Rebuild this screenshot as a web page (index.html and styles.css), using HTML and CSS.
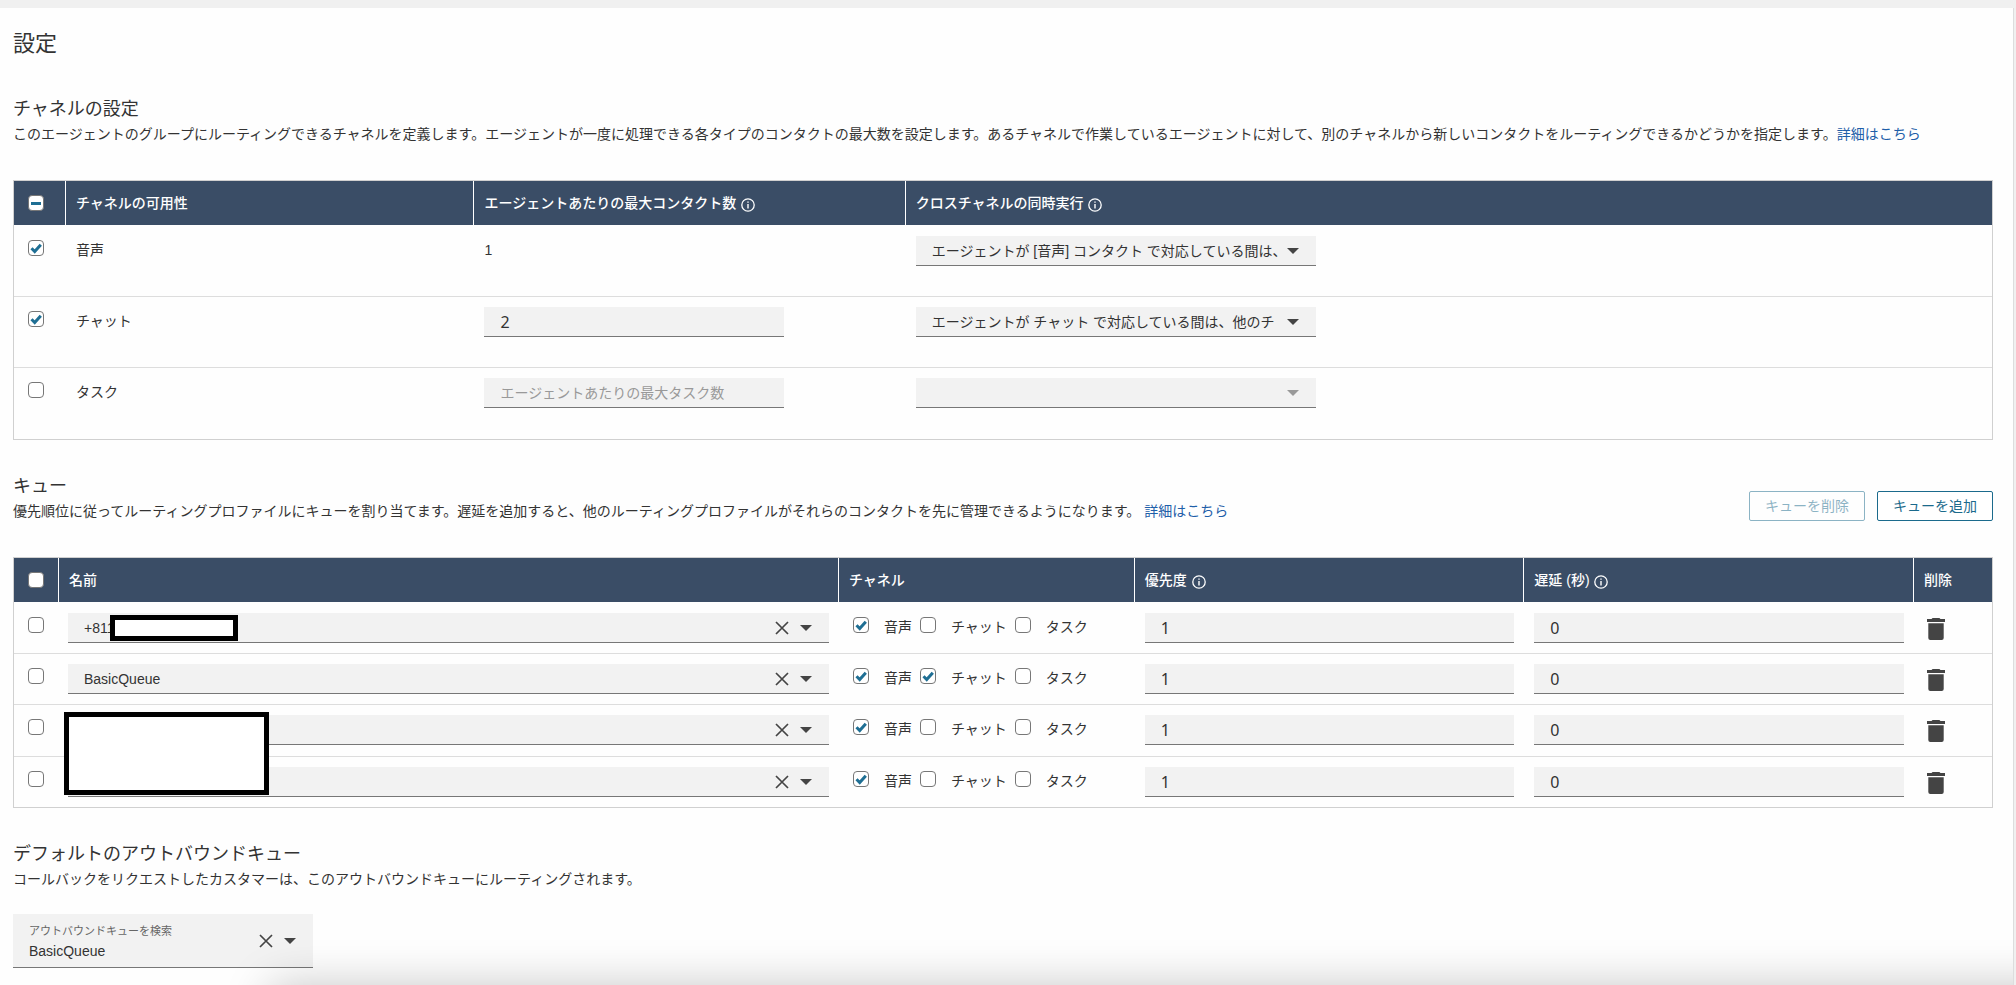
FILE: index.html
```html
<!DOCTYPE html>
<html lang="ja">
<head>
<meta charset="utf-8">
<title>設定</title>
<meta name="viewport" content="width=device-width, initial-scale=1">
<link rel="stylesheet" href="styles.css">
</head>
<body>
<svg class="sprite" aria-hidden="true">
  <symbol id="info" viewBox="0 0 14 14"><circle cx="7" cy="7" r="6.2" fill="none" stroke="currentColor" stroke-width="1.3"/><path d="M6.3 3.4h1.4v1.4H6.3zM6.3 6h1.4v4.6H6.3z" fill="currentColor"/></symbol>
  <symbol id="arrow" viewBox="0 0 12 6"><path d="M0 0h12L6 6z" fill="currentColor"/></symbol>
  <symbol id="close" viewBox="0 0 14 14"><path d="M1 1l12 12M13 1L1 13" fill="none" stroke="currentColor" stroke-width="1.7"/></symbol>
  <symbol id="trash" viewBox="0 0 18 22"><path d="M0 1h4.5L5.6 0h6.8l1.1 1H18v3H0zM1.300 5.200h15.400V20q0 2-2 2H3.300q-2 0-2-2z" fill="currentColor"/></symbol>
</svg>
<main class="panel">
  <h1 class="title">設定</h1>

  <section class="section">
    <h2 class="heading">チャネルの設定</h2>
    <p class="desc">このエージェントのグループにルーティングできるチャネルを定義します。エージェントが一度に処理できる各タイプのコンタクトの最大数を設定します。あるチャネルで作業しているエージェントに対して、別のチャネルから新しいコンタクトをルーティングできるかどうかを指定します。<a href="#">詳細はこちら</a></p>
    <table class="grid">
      <colgroup><col class="col-pick-wide"><col class="col-channel"><col class="col-max"><col></colgroup>
      <thead>
        <tr>
          <th class="pick"><input class="check mixed" type="checkbox" aria-checked="mixed" aria-label="すべて選択"></th>
          <th>チャネルの可用性</th>
          <th>エージェントあたりの最大コンタクト数 <svg class="info"><use href="#info"/></svg></th>
          <th>クロスチャネルの同時実行 <svg class="info"><use href="#info"/></svg></th>
        </tr>
      </thead>
      <tbody class="tall">
        <tr>
          <td class="pick"><input class="check" type="checkbox" id="ch-voice" checked></td>
          <td><label class="text" for="ch-voice">音声</label></td>
          <td><span class="text">1</span></td>
          <td><div class="field mode"><select class="input" aria-label="音声の同時実行"><option>エージェントが [音声] コンタクト で対応している間は、</option></select><svg class="arrow"><use href="#arrow"/></svg></div></td>
        </tr>
        <tr>
          <td class="pick"><input class="check" type="checkbox" id="ch-chat" checked></td>
          <td><label class="text" for="ch-chat">チャット</label></td>
          <td><div class="field limit"><input class="input number" value="2" aria-label="チャットの最大数"></div></td>
          <td><div class="field mode"><select class="input" aria-label="チャットの同時実行"><option>エージェントが チャット で対応している間は、他のチ</option></select><svg class="arrow"><use href="#arrow"/></svg></div></td>
        </tr>
        <tr>
          <td class="pick"><input class="check" type="checkbox" id="ch-task"></td>
          <td><label class="text" for="ch-task">タスク</label></td>
          <td><div class="field limit"><input class="input" placeholder="エージェントあたりの最大タスク数" aria-label="タスクの最大数" disabled></div></td>
          <td><div class="field mode"><select class="input" aria-label="タスクの同時実行" disabled><option></option></select><svg class="arrow"><use href="#arrow"/></svg></div></td>
        </tr>
      </tbody>
    </table>
  </section>

  <section class="section">
    <div class="bar">
      <div>
        <h2 class="heading">キュー</h2>
        <p class="desc">優先順位に従ってルーティングプロファイルにキューを割り当てます。遅延を追加すると、他のルーティングプロファイルがそれらのコンタクトを先に管理できるようになります。 <a href="#">詳細はこちら</a></p>
      </div>
      <div class="actions">
        <button class="button" type="button" disabled>キューを削除</button>
        <button class="button" type="button">キューを追加</button>
      </div>
    </div>
    <table class="grid queues">
      <colgroup><col class="col-pick"><col><col class="col-channels"><col class="col-value"><col class="col-value"><col class="col-delete"></colgroup>
      <thead>
        <tr>
          <th class="pick"><input class="check" type="checkbox" aria-label="すべて選択"></th>
          <th>名前</th>
          <th>チャネル</th>
          <th>優先度 <svg class="info"><use href="#info"/></svg></th>
          <th>遅延 (秒) <svg class="info"><use href="#info"/></svg></th>
          <th>削除</th>
        </tr>
      </thead>
      <tbody>
        <tr>
          <td class="pick"><input class="check" type="checkbox" aria-label="キュー1を選択"></td>
          <td><div class="field"><input class="input" value="+811" aria-label="キュー名"><button class="clear" type="button" aria-label="クリア"><svg><use href="#close"/></svg></button><svg class="arrow"><use href="#arrow"/></svg><span class="mask mask-phone"></span></div></td>
          <td><div class="channels"><label><input class="check" type="checkbox" checked>音声</label><label><input class="check" type="checkbox">チャット</label><label><input class="check" type="checkbox">タスク</label></div></td>
          <td><input class="input number" value="1" aria-label="優先度"></td>
          <td><input class="input number" value="0" aria-label="遅延"></td>
          <td><button class="trash" type="button" aria-label="削除"><svg><use href="#trash"/></svg></button></td>
        </tr>
        <tr>
          <td class="pick"><input class="check" type="checkbox" aria-label="キュー2を選択"></td>
          <td><div class="field"><input class="input" value="BasicQueue" aria-label="キュー名"><button class="clear" type="button" aria-label="クリア"><svg><use href="#close"/></svg></button><svg class="arrow"><use href="#arrow"/></svg></div></td>
          <td><div class="channels"><label><input class="check" type="checkbox" checked>音声</label><label><input class="check" type="checkbox" checked>チャット</label><label><input class="check" type="checkbox">タスク</label></div></td>
          <td><input class="input number" value="1" aria-label="優先度"></td>
          <td><input class="input number" value="0" aria-label="遅延"></td>
          <td><button class="trash" type="button" aria-label="削除"><svg><use href="#trash"/></svg></button></td>
        </tr>
        <tr>
          <td class="pick"><input class="check" type="checkbox" aria-label="キュー3を選択"></td>
          <td><div class="field"><input class="input" aria-label="キュー名"><button class="clear" type="button" aria-label="クリア"><svg><use href="#close"/></svg></button><svg class="arrow"><use href="#arrow"/></svg><span class="mask mask-names"></span></div></td>
          <td><div class="channels"><label><input class="check" type="checkbox" checked>音声</label><label><input class="check" type="checkbox">チャット</label><label><input class="check" type="checkbox">タスク</label></div></td>
          <td><input class="input number" value="1" aria-label="優先度"></td>
          <td><input class="input number" value="0" aria-label="遅延"></td>
          <td><button class="trash" type="button" aria-label="削除"><svg><use href="#trash"/></svg></button></td>
        </tr>
        <tr>
          <td class="pick"><input class="check" type="checkbox" aria-label="キュー4を選択"></td>
          <td><div class="field"><input class="input" aria-label="キュー名"><button class="clear" type="button" aria-label="クリア"><svg><use href="#close"/></svg></button><svg class="arrow"><use href="#arrow"/></svg></div></td>
          <td><div class="channels"><label><input class="check" type="checkbox" checked>音声</label><label><input class="check" type="checkbox">チャット</label><label><input class="check" type="checkbox">タスク</label></div></td>
          <td><input class="input number" value="1" aria-label="優先度"></td>
          <td><input class="input number" value="0" aria-label="遅延"></td>
          <td><button class="trash" type="button" aria-label="削除"><svg><use href="#trash"/></svg></button></td>
        </tr>
      </tbody>
    </table>
  </section>

  <section class="section">
    <h2 class="heading">デフォルトのアウトバウンドキュー</h2>
    <p class="desc">コールバックをリクエストしたカスタマーは、このアウトバウンドキューにルーティングされます。</p>
    <div class="field outbound">
      <label for="outbound">アウトバウンドキューを検索</label>
      <input id="outbound" value="BasicQueue">
      <button class="clear" type="button" aria-label="クリア"><svg><use href="#close"/></svg></button>
      <svg class="arrow"><use href="#arrow"/></svg>
    </div>
  </section>
  <div class="shade"></div>
</main>
</body>
</html>
```

FILE: styles.css
```css
* {
  box-sizing: border-box;
}

body {
  margin: 0;
  background: #f0f0f0;
  color: #333;
  font-family: "Liberation Sans", "Noto Sans CJK JP", sans-serif;
  font-size: 14px;
  line-height: 20px;
}

input,
select,
button {
  margin: 0;
  font: inherit;
  color: inherit;
}

a {
  color: #1f5fa9;
  text-decoration: none;
}

.sprite {
  display: none;
}

.panel {
  position: relative;
  min-height: calc(100vh - 8px);
  margin: 8px 2px 0 0;
  padding: 20px 20px 16px 13px;
  border-right: 1px solid #ddd;
  background: #fefefe;
  overflow: hidden;
}

.title {
  margin: 0 0 3px;
  font-size: 22px;
  font-weight: 400;
  line-height: 32px;
}

.section {
  padding-top: 33px;
}

.heading {
  margin: 0 0 2px;
  font-size: 18px;
  font-weight: 400;
  line-height: 26px;
}

.desc {
  margin: 0;
}

.bar {
  display: flex;
  justify-content: space-between;
  align-items: flex-end;
}

.actions {
  display: flex;
  flex: none;
  gap: 12px;
}

.button {
  height: 30px;
  padding: 0 15px;
  border: 1px solid #1b6a8c;
  border-radius: 2px;
  background: #fff;
  color: #1b6a8c;
  line-height: 20px;
}

.button:disabled {
  opacity: 0.5;
}

/* Tables */

.grid {
  width: 100%;
  margin-top: 36px;
  border: 1px solid #d0d0d0;
  border-spacing: 0;
  table-layout: fixed;
}

.col-pick-wide { width: 52px; }
.col-pick { width: 45px; }
.col-channel { width: 20.65%; }
.col-max { width: 21.8%; }
.col-channels { width: 14.95%; }
.col-value { width: 19.7%; }
.col-delete { width: 78px; }

.grid th {
  height: 44px;
  padding: 0 10px;
  border-right: 1px solid #fff;
  background: #3a4d66;
  color: #fff;
  font-weight: 500;
  text-align: left;
}

.grid th:last-child {
  border-right: 0;
}

.grid td {
  height: 51px;
  padding: 10px 10px 0;
  border-top: 1px solid #ddd;
  vertical-align: top;
}

.queues td:nth-child(2) {
  padding-left: 9px;
}

.grid .tall td {
  height: 71px;
}

.grid tr:nth-child(3) td {
  height: 52px;
}

.grid .tall tr:nth-child(3) td {
  height: 72px;
}

.grid tr:first-child td {
  border-top-color: transparent;
}

.grid .pick {
  padding-left: 14px;
  padding-right: 0;
}

.text {
  display: block;
  margin-top: 4px;
}

.info {
  width: 14px;
  height: 14px;
  margin-left: 1px;
  vertical-align: -4px;
}

/* Controls */

.check {
  appearance: none;
  display: block;
  flex: none;
  width: 16px;
  height: 16px;
  border: 1px solid #777;
  border-radius: 4px;
  background: #fff center / 14px 14px no-repeat;
}

td .check {
  margin-top: 4px;
}

.check:checked {
  background-image: url("data:image/svg+xml,%3Csvg xmlns='http://www.w3.org/2000/svg' viewBox='0 0 14 14'%3E%3Cpath d='M2.500 7.300l3.200 3.200L11.800 3.700' fill='none' stroke='%231f6f94' stroke-width='3'/%3E%3C/svg%3E");
}

.mixed {
  background-image: linear-gradient(#1f6f94, #1f6f94);
  background-size: 10px 3px;
}

.field {
  position: relative;
}

.limit {
  max-width: 300px;
}

.mode {
  max-width: 400px;
}

.input {
  appearance: none;
  display: block;
  width: 100%;
  height: 30px;
  padding: 0 16px;
  border: 0;
  border-bottom: 1px solid #777;
  border-radius: 0;
  background: #f2f2f2;
  opacity: 1;
}

.input::placeholder {
  color: #999;
}

.number {
  font-family: "Noto Sans", sans-serif;
  font-size: 16px;
}

.mode .input {
  padding-right: 36px;
}

.arrow {
  position: absolute;
  top: 12px;
  right: 17px;
  width: 12px;
  height: 6px;
  color: #444;
  pointer-events: none;
}

.input:disabled + .arrow {
  color: #999;
}

.clear {
  position: absolute;
  top: 8px;
  right: 40px;
  width: 14px;
  height: 14px;
  padding: 0;
  border: 0;
  background: none;
  color: #444;
}

.clear svg,
.trash svg {
  display: block;
  width: 100%;
  height: 100%;
}

.channels {
  display: flex;
  gap: 8px;
  padding: 4px 0 0 4px;
}

.channels label {
  display: flex;
  gap: 15px;
  white-space: nowrap;
}

.channels .check {
  margin-top: 0;
}

.trash {
  display: block;
  width: 18px;
  height: 22px;
  margin: 5px 0 0 3px;
  padding: 0;
  border: 0;
  background: none;
  color: #444;
}

.mask {
  position: absolute;
  z-index: 1;
  border: 5px solid #000;
  background: #fff;
}

.mask-phone {
  top: 2px;
  left: 42px;
  width: 128px;
  height: 26px;
}

.mask-names {
  top: -3px;
  left: -4px;
  width: 205px;
  height: 83px;
}

/* Outbound queue */

.outbound {
  width: 300px;
  height: 54px;
  margin-top: 25px;
  padding: 7px 16px 0;
  border-bottom: 1px solid #777;
  background: #f2f2f2;
}

.outbound label {
  display: block;
  color: #666;
  font-size: 11px;
}

.outbound input {
  display: block;
  width: 200px;
  height: 20px;
  padding: 0;
  border: 0;
  background: none;
}

.outbound .clear {
  top: 20px;
}

.outbound .arrow {
  top: 24px;
}

.shade {
  position: absolute;
  top: 100%;
  left: 270px;
  right: -60px;
  height: 80px;
  box-shadow: 0 0 45px rgba(0, 0, 0, 0.22);
  pointer-events: none;
}
```
